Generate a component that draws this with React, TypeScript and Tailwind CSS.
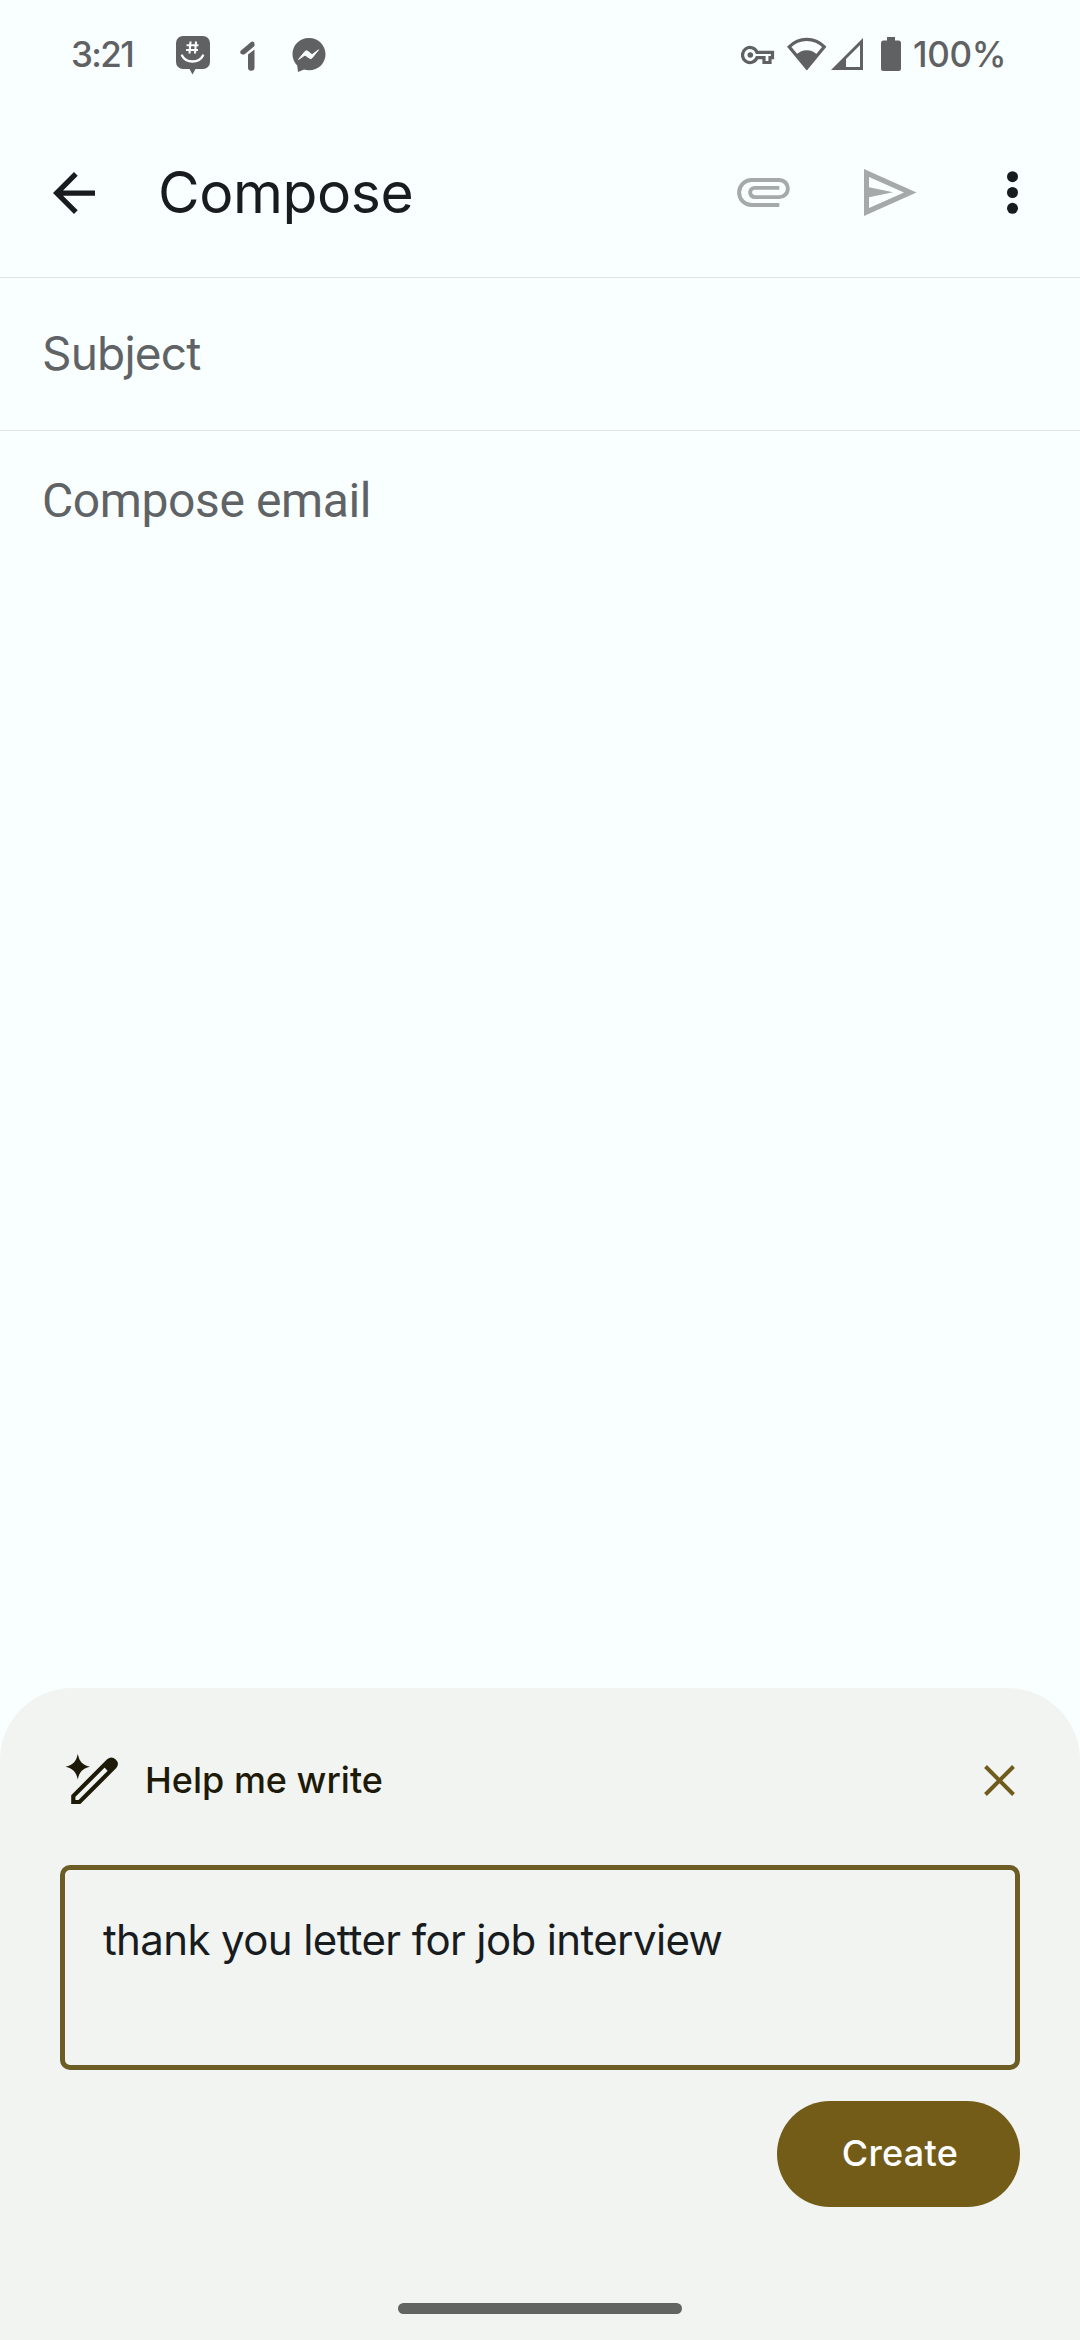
import { useState } from "react";

function StatusBar() {
    return (
        <div className="h-[108px] shrink-0 flex items-center pl-[71px] pr-[75px] text-[#5f6163] fill-[#5f6163]">
            <span className="w-[105px] text-[35px] leading-none font-medium tracking-[-1.6px] whitespace-nowrap">3:21</span>
            <svg width="34" height="40" viewBox="0 0 34 40" className="mt-1">
                <path d="M7 0h20a7 7 0 0 1 7 7v19a7 7 0 0 1-7 7h-7.500l-3 5.500-3-5.500H7a7 7 0 0 1-7-7V7a7 7 0 0 1 7-7z" />
                <path d="M14.500 5.500l-1 12M20 5.500l-1 12M10.500 9.200h12M10 14h12" className="stroke-[#f9feff]" strokeWidth="2.100" fill="none" />
                <path d="M6 19.500c4 8 17 8 21 0" className="stroke-[#f9feff]" strokeWidth="2.400" fill="none" strokeLinecap="round" />
            </svg>
            <svg width="16" height="30" viewBox="0 0 16 30" className="ml-[30px] mt-[3px]">
                <path d="M1 9.500 11 .9Q14.500-.8 14.500 3.200V5L5 13Q2 14.500.5 12.200-.3 10.800 1 9.500z" />
                <path d="M8 13.500l6.500-5V26.500a3.200 3.200 0 0 1-6.500 0z" />
            </svg>
            <svg width="34" height="36" viewBox="0 0 34 36" className="ml-9 mt-1">
                <path d="M17 0C7.500 0 .5 7 .5 16.300c0 4.200 1.600 8 4.700 11.200L6 34l6-2.500c1.600.5 3.200.8 5 .8 9.500 0 16.500-7 16.500-16S26.500 0 17 0z" />
                <path d="M6.500 21.500l6.500-8q1.300-1.400 3 0l4 3.300 6.500-5-6.300 8q-1.300 1.500-3 .2L13 17z" className="fill-[#f9feff] stroke-[#f9feff]" strokeWidth="1" strokeLinejoin="round" />
            </svg>

            <div className="ml-auto flex items-center">
                <svg width="34" height="22" viewBox="0 0 34 22" className="mt-1">
                    <path d="M16 7.300H31.500v5.400H29V17.500h-6v-4.800h-7A7.500 7.500 0 1 1 16 7.300z" fill="none" className="stroke-[#5f6163]" strokeWidth="3.200" />
                    <circle cx="9.300" cy="10" r="2.800" />
                </svg>
                <svg width="40" height="34" viewBox="0 0 40 34" className="ml-3">
                    <path d="M2.200 9.800C12-.2 27.500-.2 37.300 9.800L19.800 31z" fill="none" className="stroke-[#5f6163]" strokeWidth="3.200" />
                    <path d="M8.500 18.500c6-7 16.500-7 22.500 0L19.800 33z" />
                </svg>
                <svg width="34" height="34" viewBox="0 0 34 34" className="ml-1">
                    <path d="M3.500 31.500H30.500V4.500z" fill="none" className="stroke-[#5f6163]" strokeWidth="3" />
                    <path d="M1 33L15 19v14z" />
                </svg>
                <svg width="20" height="34" viewBox="0 0 20 34" className="ml-4">
                    <path d="M6 0h8v3.500h3.500A2.500 2.500 0 0 1 20 6v25.500a2.500 2.500 0 0 1-2.500 2.500h-15A2.500 2.500 0 0 1 0 31.500V6a2.500 2.500 0 0 1 2.500-2.500H6z" />
                </svg>
                <span className="ml-[12px] w-[92px] text-[35px] leading-none font-medium tracking-[-0.3px] whitespace-nowrap">100%</span>
            </div>
        </div>
    );
}

function Toolbar() {
    return (
        <header className="h-[170px] shrink-0 flex items-center pl-[53px] pr-[62px] border-b border-[#dfe3e4] text-[#181c1e]">
            <button aria-label="Back">
                <svg width="42" height="42" viewBox="4 4 16 16" fill="currentColor">
                    <path d="M20 11H7.830l5.590-5.590L12 4l-8 8 8 8 1.410-1.410L7.830 13H20v-2z" />
                </svg>
            </button>
            <h1 className="ml-[63px] text-[57px] leading-none tracking-[-0.4px]">Compose</h1>
            <div className="ml-auto flex items-center text-[#a5a9aa]">
                <button aria-label="Attach">
                    <svg width="53" height="29" viewBox="2 7 20 11" fill="none" stroke="currentColor" strokeWidth="1.500">
                        <path d="M18 17.250H7.500a4.750 4.750 0 0 1 0-9.500H18a3.250 3.250 0 0 1 0 6.500H8.700a1.750 1.750 0 0 1 0-3.500H18" />
                    </svg>
                </button>
                <button aria-label="Send" className="ml-[74px]">
                    <svg width="53" height="47" viewBox="0 0 53 47" fill="currentColor">
                        <path fillRule="evenodd" d="M0 0L52.500 23.500 0 47zM5 8v31l35-15.500z" />
                        <path d="M5 18.300l24 5-24 5z" />
                    </svg>
                </button>
                <button aria-label="More options" className="ml-[90px] text-[#181c1e]">
                    <svg width="11" height="43" viewBox="0 0 11 43" fill="currentColor">
                        <circle cx="5.500" cy="5.700" r="5.500" />
                        <circle cx="5.500" cy="21.500" r="5.500" />
                        <circle cx="5.500" cy="37.300" r="5.500" />
                    </svg>
                </button>
            </div>
        </header>
    );
}

function HelpMeWrite() {
    const [prompt, setPrompt] = useState("thank you letter for job interview");

    return (
        <section className="h-[652px] shrink-0 flex flex-col px-[60px] rounded-t-[72px] bg-[#f2f4f2]">
            <div className="mt-[64px] h-[56px] flex items-center text-[#1e1a08]">
                <svg width="54" height="52" viewBox="0 0 54 52" className="ml-[5px]" fill="currentColor">
                    <path d="M12.800 0C14.500 7.500 17 10.800 25 12.800 17 14.800 14.500 18 12.800 25.500 11 18 8.500 14.800.5 12.800 8.500 10.800 11 7.500 12.800 0z" />
                    <path d="M8.300 48V42L43.500 6.800q3-2.500 5.800.3 2.800 2.800.2 5.800L14.500 48z" fill="none" stroke="currentColor" strokeWidth="4.200" />
                    <path d="M38 12l6-6q3.500-2.500 6 .3 2.500 2.800 0 5.700l-6 6.300z" />
                </svg>
                <h2 className="ml-[26px] text-[36px] leading-none font-medium whitespace-nowrap">Help me write</h2>
                <button aria-label="Close" className="ml-auto mr-[5px] text-[#6f5b1b]">
                    <svg width="31" height="31" viewBox="0 0 31 31" stroke="currentColor" strokeWidth="4">
                        <path d="M1.500 1.500l28 28M29.500 1.500l-28 28" />
                    </svg>
                </button>
            </div>
            <textarea
                value={prompt}
                onChange={(e) => setPrompt(e.target.value)}
                spellCheck={false}
                className="mt-[57px] h-[205px] w-full shrink-0 resize-none overflow-hidden rounded-[10px] border-[5px] border-[#6b5d24] px-[38px] pt-[42px] text-[42px] leading-[56px] tracking-[-0.62px] text-[#181c1e] outline-none"
            />
            <button className="mt-[31px] h-[106px] w-[243px] shrink-0 self-end rounded-full bg-[#735c18] pb-[2px] pl-[3px] text-[36px] font-medium tracking-[0.3px] text-white">
                Create
            </button>
            <div className="mt-[96px] h-[11px] w-[284px] self-center rounded-full bg-[#626462]" />
        </section>
    );
}

export default function App() {
    return (
        <div className="w-[1080px] h-[2340px] flex flex-col overflow-hidden bg-[#f9feff] font-['Inter',sans-serif]">
            <StatusBar />
            <Toolbar />
            <input
                type="text"
                placeholder="Subject"
                className="h-[153px] shrink-0 px-[42px] pb-[2px] border-b border-[#e3e7e8] text-[46px] tracking-[-0.8px] outline-none placeholder:text-[#5f6365]"
            />
            <textarea
                placeholder="Compose email"
                className="flex-1 resize-none px-[42px] pt-[42px] text-[48px] leading-[56px] tracking-[-0.4px] font-['Roboto',sans-serif] outline-none placeholder:text-[#5f6365]"
            />
            <HelpMeWrite />
        </div>
    );
}
